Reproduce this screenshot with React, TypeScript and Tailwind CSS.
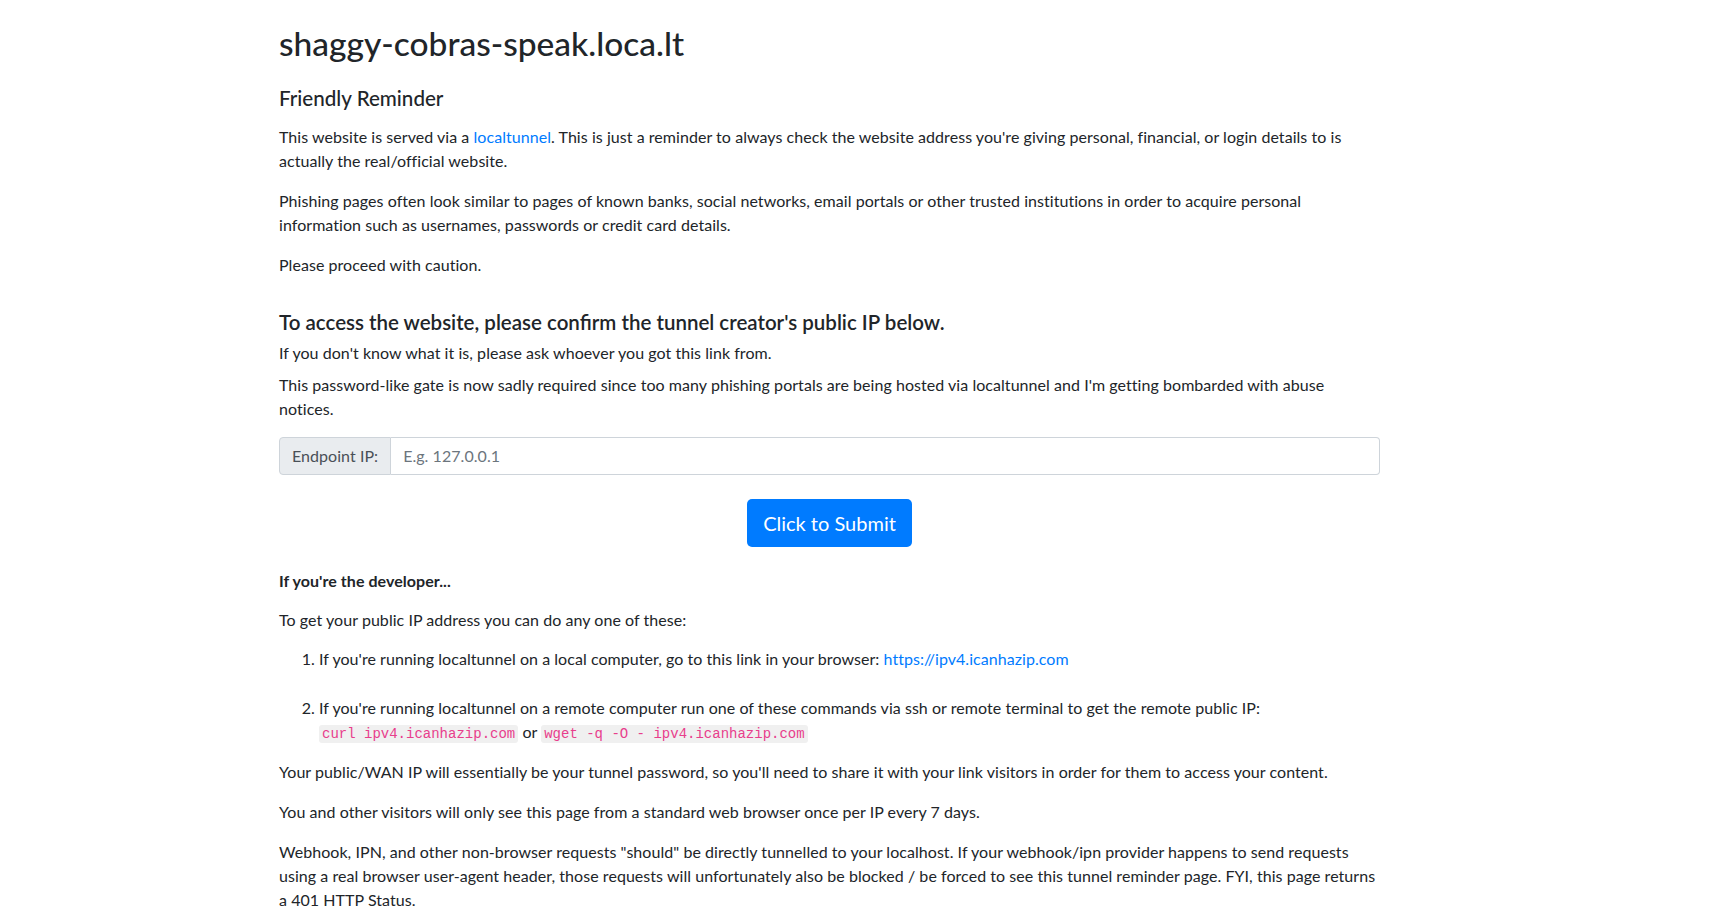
import React from "react";

const font = {
  fontFamily: '"Segoe UI", Lato, "Noto Sans", Arial, sans-serif',
};

const Code: React.FC<{ children: React.ReactNode }> = ({ children }) => (
  <code className="font-['Liberation_Mono',monospace] text-[14px] tracking-normal text-[#e83e8c] bg-[#f0f0f0] rounded-[3px] px-[3px] py-[1px]">
    {children}
  </code>
);

export default function App() {
  return (
    <div className="min-h-screen bg-white text-[#212529]" style={font}>
      <div className="ml-[279px] w-[1101px] pt-[22px] pb-[10px]">
        <h1 className="text-[33.5px] leading-[43px] font-medium mb-[19px]">
          shaggy-cobras-speak.loca.lt
        </h1>
        <h4 className="text-[20.6px] leading-[28px] font-medium mb-[13px]">
          Friendly Reminder
        </h4>
        <div className="text-[16px] leading-[24px] tracking-[0.05px]">
          <p className="mb-4">
            This website is served via a{" "}
            <a href="#" className="text-[#007bff]">
              localtunnel
            </a>
            . This is just a reminder to always check the website address you're
            giving personal, financial, or login details to is actually the
            real/official website.
          </p>
          <p className="mb-4">
            Phishing pages often look similar to pages of known banks, social
            networks, email portals or other trusted institutions in order to
            acquire personal information such as usernames, passwords or credit
            card details.
          </p>
          <p>Please proceed with caution.</p>

          <h5 className="mt-[33px] mb-[7px] text-[20.5px] leading-[24px] font-semibold tracking-normal">
            To access the website, please confirm the tunnel creator's public IP
            below.
          </h5>
          <p className="mb-2">
            If you don't know what it is, please ask whoever you got this link
            from.
          </p>
          <p className="mb-4">
            This password-like gate is now sadly required since too many phishing
            portals are being hosted via localtunnel and I'm getting bombarded
            with abuse notices.
          </p>

          <div className="flex h-[38px] w-full">
            <span className="flex items-center px-3 bg-[#e9ecef] border border-[#ced4da] rounded-l-[4px] text-[#495057]">
              Endpoint IP:
            </span>
            <input
              type="text"
              placeholder="E.g. 127.0.0.1"
              className="flex-1 px-3 border border-l-0 border-[#ced4da] rounded-r-[4px] text-[#495057] placeholder:text-[#6c757d] outline-none"
            />
          </div>

          <div className="flex justify-center mt-[24px]">
            <button className="h-[48px] px-4 bg-[#007bff] text-white text-[20px] tracking-normal rounded-[5px]">
              Click to Submit
            </button>
          </div>

          <p className="mt-[22px] mb-[15px] font-bold">If you're the developer...</p>
          <p className="mb-[15px]">
            To get your public IP address you can do any one of these:
          </p>
          <ol className="list-decimal pl-10 mb-[14px]">
            <li className="mb-[25px]">
              If you're running localtunnel on a local computer, go to this link
              in your browser:{" "}
              <a href="#" className="text-[#007bff]">
                https://ipv4.icanhazip.com
              </a>
            </li>
            <li>
              If you're running localtunnel on a remote computer run one of these
              commands via ssh or remote terminal to get the remote public IP:
              <br />
              <Code>curl ipv4.icanhazip.com</Code> or{" "}
              <Code>wget -q -O - ipv4.icanhazip.com</Code>
            </li>
          </ol>
          <p className="mb-4">
            Your public/WAN IP will essentially be your tunnel password, so
            you'll need to share it with your link visitors in order for them to
            access your content.
          </p>
          <p className="mb-4">
            You and other visitors will only see this page from a standard web
            browser once per IP every 7 days.
          </p>
          <p>
            Webhook, IPN, and other non-browser requests "should" be directly
            tunnelled to your localhost. If your webhook/ipn provider happens to
            send requests using a real browser user-agent header, those requests
            will unfortunately also be blocked / be forced to see this tunnel
            reminder page. FYI, this page returns a 401 HTTP Status.
          </p>
        </div>
      </div>
    </div>
  );
}
